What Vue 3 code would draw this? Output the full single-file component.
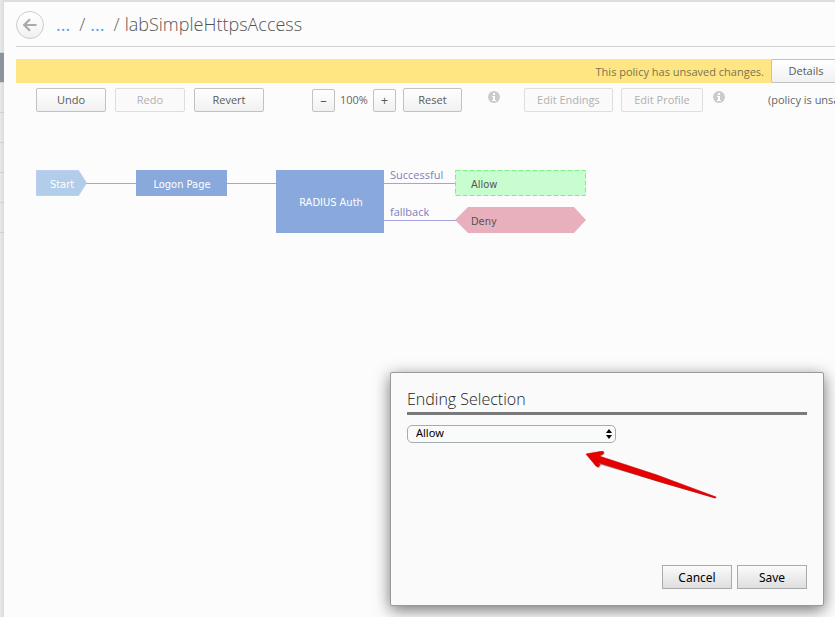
<script setup>
import { ref } from 'vue'

const ending = ref('Allow')
const railItems = [0, 1, 2, 3, 4, 5, 6]
</script>

<template>
  <div class="page">
    <aside class="rail">
      <span v-for="i in railItems" :key="i" class="rail-item" :class="{ active: i === 1, first: i === 0 }"></span>
    </aside>

    <main class="main">
      <header class="header">
        <button class="back" type="button" aria-label="Back">
          <svg width="16" height="14" viewBox="0 0 16 14" fill="none" stroke="#aaa" stroke-width="2.2">
            <path d="M14.5 7H2.5M8 1.2L2.2 7L8 12.8" />
          </svg>
        </button>
        <nav class="crumbs">
          <a href="#">...</a><span class="slash">/</span><a href="#">...</a><span class="slash">/</span>
          <h1>labSimpleHttpsAccess</h1>
        </nav>
      </header>

      <div class="notice">
        <span>This policy has unsaved changes.</span>
        <button class="btn details" type="button">Details</button>
      </div>

      <div class="toolbar">
        <div class="group history">
          <button class="btn wide" type="button">Undo</button>
          <button class="btn wide" type="button" disabled>Redo</button>
          <button class="btn wide" type="button">Revert</button>
        </div>
        <div class="group zoom">
          <button class="btn square" type="button">–</button>
          <span>100%</span>
          <button class="btn square" type="button">+</button>
          <button class="btn reset" type="button">Reset</button>
        </div>
        <svg class="info" width="12" height="12" viewBox="0 0 12 12">
          <circle cx="6" cy="6" r="6" fill="#cbcbcb" />
          <path d="M5 2h2v2H5zM4 5h3v4h1v1H4V9h1V6H4z" fill="#fff" />
        </svg>
        <div class="group edit">
          <button class="btn endings" type="button" disabled>Edit Endings</button>
          <button class="btn profile" type="button" disabled>Edit Profile</button>
        </div>
        <svg class="info last" width="12" height="12" viewBox="0 0 12 12">
          <circle cx="6" cy="6" r="6" fill="#cbcbcb" />
          <path d="M5 2h2v2H5zM4 5h3v4h1v1H4V9h1V6H4z" fill="#fff" />
        </svg>
        <span class="status">(policy is unsaved)</span>
      </div>

      <svg class="flow" width="560" height="72" viewBox="0 -8 560 72">
        <g stroke="#a5a2e2" stroke-width="1">
          <path d="M50 13.500H100M191 13.500H240M348 13.500H420M348 50.500H420" />
        </g>
        <path d="M.5 .5H42.500L50.500 13L42.500 25.500H.5z" fill="#b1cde9" stroke="#bfccf5" stroke-linejoin="round" />
        <rect x="100" width="91" height="26" fill="#89a9dd" />
        <rect x="240" width="108" height="63" fill="#89a9dd" />
        <rect x="419.500" y=".5" width="130" height="25" fill="#c8fdd0" stroke="#77f283" stroke-dasharray="5 2" />
        <path d="M419 50L432 37H538L550 50L538 63H432z" fill="#e8b0bc" />
        <g class="node-text" fill="#fff" text-anchor="middle">
          <text x="26" y="18">Start</text>
          <text x="146" y="18">Logon Page</text>
          <text x="295" y="36">RADIUS Auth</text>
        </g>
        <g class="branch-text" fill="#8180bd">
          <text x="354" y="9">Successful</text>
          <text x="354" y="46">fallback</text>
        </g>
        <g class="node-text" fill="#555">
          <text x="435" y="18">Allow</text>
          <text x="435" y="55">Deny</text>
        </g>
      </svg>
    </main>

    <section class="dialog" role="dialog" aria-labelledby="dialog-title">
      <h2 id="dialog-title">Ending Selection</h2>
      <div class="picker">
        <select v-model="ending" aria-labelledby="dialog-title">
          <option>Allow</option>
          <option>Deny</option>
        </select>
        <svg class="stepper" width="6" height="10" viewBox="0 0 6 10">
          <path d="M0 4L3 0L6 4zM0 6H6L3 10z" fill="#000" />
        </svg>
      </div>
      <svg class="arrow" width="134" height="50" viewBox="0 0 134 50">
        <path d="M2 4L19 0.500L19.500 3L15 6L132 46.500L131 47.500L13 13L16 14.500L14 17L12 16z" fill="#666" opacity=".6" />
        <path d="M1 3L18 0L18.500 2.500L14 5L72 24L131 46L130 47L72 30L13 11.500L15 13.500L13 16L11 15z" fill="#e80000" stroke="#c40000" stroke-width=".6" />
      </svg>
      <footer>
        <button class="action" type="button">Cancel</button>
        <button class="action" type="button">Save</button>
      </footer>
    </section>
  </div>
</template>

<style>
body {
  background: #fcfcfc;
}
</style>

<style scoped>
* {
  box-sizing: border-box;
}
.page {
  position: relative;
  display: flex;
  min-height: 100vh;
  overflow: hidden;
  font-family: "Open Sans", sans-serif;
  font-size: 11px;
  color: #666;
  background: #fcfcfc;
}
.rail {
  flex: 0 0 4px;
  display: flex;
  flex-direction: column;
  background: linear-gradient(to right, #e8e9ea, #d9dbdc);
}
.rail-item {
  height: 30px;
  border-bottom: 1px solid #cfd1d2;
}
.rail-item.first {
  height: 53px;
}
.rail-item.active {
  background: #8b949d;
}
.main {
  flex: 1;
  min-width: 0;
  padding-left: 12px;
  border-top: 2px solid #dededf;
}
.header {
  display: flex;
  align-items: center;
  height: 45px;
  padding-top: 2px;
  border-bottom: 1px solid #d3d3d3;
}
.back {
  display: flex;
  align-items: center;
  justify-content: center;
  width: 28px;
  height: 28px;
  padding: 0;
  border: 1px solid #ccc;
  border-radius: 50%;
  background: linear-gradient(#fff, #f1f1f1);
}
.crumbs {
  display: flex;
  align-items: center;
  margin-left: 12px;
  padding-bottom: 2px;
  font-size: 18px;
  line-height: 24px;
}
.crumbs a {
  color: #5c9ee6;
  text-decoration: none;
}
.slash {
  margin: 0 5px 0 9px;
  font-weight: 300;
}
h1 {
  margin: 0;
  font-size: 18px;
  font-weight: 300;
  color: #555;
}
.notice {
  display: flex;
  align-items: center;
  justify-content: flex-end;
  height: 24px;
  margin-top: 12px;
  background: #ffe682;
  color: #7b7351;
}
.btn {
  flex: none;
  height: 24px;
  padding: 0 0 2px;
  border: 1px solid #c2c2c2;
  border-radius: 2px;
  background: linear-gradient(#fff, #f1f1f1);
  font-family: inherit;
  font-size: 11px;
  color: #5a5a5a;
}
.btn:disabled {
  border-color: #dedede;
  background: #fafafa;
  color: #b0b0b0;
}
.details {
  width: 70px;
  margin: 0 -6px 0 7px;
}
.toolbar {
  display: flex;
  align-items: center;
  height: 24px;
  margin-top: 5px;
  padding-left: 20px;
  white-space: nowrap;
}
.group {
  display: flex;
  align-items: center;
}
.history {
  gap: 9px;
}
.wide {
  width: 70px;
}
.zoom {
  gap: 5px;
  margin-left: 48px;
}
.zoom span,
.status {
  padding-bottom: 2px;
}
.square {
  width: 23px;
  height: 23px;
  padding: 0;
  font-size: 13px;
  line-height: 20px;
}
.reset {
  width: 59px;
  margin-left: 2px;
}
.info {
  flex: none;
  margin: 0 24px 6px 26px;
}
.info.last {
  margin: 0 43px 6px 10px;
}
.edit {
  gap: 8px;
}
.endings {
  width: 89px;
}
.profile {
  width: 82px;
}
.flow {
  display: block;
  margin: 50px 0 0 20px;
}
.node-text {
  font-family: "DejaVu Sans Condensed", "Noto Sans", sans-serif;
  font-size: 11px;
}
.branch-text {
  font-size: 11px;
}
.dialog {
  position: absolute;
  right: 11px;
  bottom: 11px;
  display: flex;
  flex-direction: column;
  width: 434px;
  min-height: 234px;
  padding: 16px;
  border: 1px solid #999;
  border-radius: 2px;
  background: #fafafa;
  box-shadow: 0 4px 16px rgba(0, 0, 0, 0.55);
}
h2 {
  margin: 0;
  padding-bottom: 3px;
  border-bottom: 3px solid #7a7a7a;
  font-size: 16px;
  font-weight: 300;
  line-height: 20px;
  color: #222;
}
.picker {
  position: relative;
  width: 209px;
  margin-top: 10px;
}
select {
  display: block;
  appearance: none;
  width: 100%;
  height: 18px;
  padding: 0 8px 2px;
  border: 1px solid #a3acb0;
  border-radius: 5px;
  background: #fafafa;
  font-family: "Noto Sans", sans-serif;
  font-size: 11px;
  line-height: 14px;
  color: #000;
}
.stepper {
  position: absolute;
  top: 4px;
  right: 4px;
}
.arrow {
  position: absolute;
  top: 78px;
  left: 194px;
}
footer {
  display: flex;
  justify-content: flex-end;
  gap: 5px;
  margin-top: auto;
}
.action {
  width: 70px;
  height: 24px;
  padding: 0;
  border: 1px solid #aaa;
  background: linear-gradient(#fbfbfb, #dedede);
  font-family: "Noto Sans", sans-serif;
  font-size: 12px;
  color: #000;
}
</style>
